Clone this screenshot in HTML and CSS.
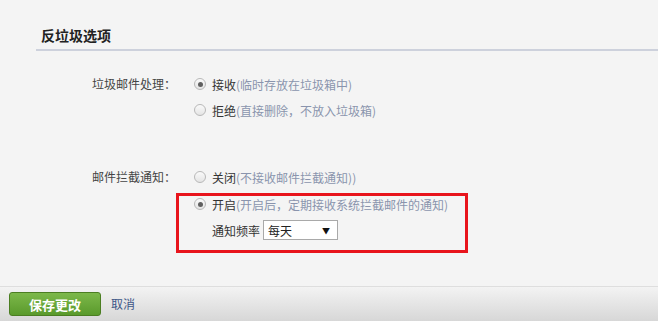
FILE: index.html
```html
<!DOCTYPE html>
<html lang="zh-CN">
<head>
<meta charset="utf-8">
<title>反垃圾选项</title>
<link rel="stylesheet" href="styles.css">
</head>
<body>
<div class="page">
  <div class="main">
    <div class="title">反垃圾选项</div>
    <div class="group group-first">
      <div class="label">垃圾邮件处理：</div>
      <div class="options">
        <div class="opt"><span class="radio checked"></span><span class="txt">接收</span><span class="hint">(临时存放在垃圾箱中)</span></div>
        <div class="opt"><span class="radio"></span><span class="txt">拒绝</span><span class="hint">(直接删除，不放入垃圾箱)</span></div>
      </div>
    </div>
    <div class="group group-second">
      <div class="label">邮件拦截通知：</div>
      <div class="options">
        <div class="opt"><span class="radio"></span><span class="txt">关闭</span><span class="hint">(不接收邮件拦截通知))</span></div>
        <div class="box">
          <div class="opt opt-in"><span class="radio checked"></span><span class="txt">开启</span><span class="hint">(开启后，定期接收系统拦截邮件的通知)</span></div>
          <div class="freq"><span class="freq-label">通知频率</span><div class="select"><span>每天</span><span class="arrow">▼</span></div></div>
        </div>
      </div>
    </div>
  </div>
  <div class="footer">
    <button class="btn-save">保存更改</button>
    <a class="cancel">取消</a>
  </div>
</div>
</body>
</html>
```
FILE: styles.css
```css
html, body {
  margin: 0;
  padding: 0;
}
body {
  background: #f4f4f4;
  font-family: "Microsoft YaHei", "Noto Sans CJK SC", "Noto Sans", sans-serif;
  font-size: 12px;
  color: #444;
}
.page {
  width: 658px;
  height: 321px;
  display: flex;
  flex-direction: column;
}
.main {
  height: 286px;
  padding-left: 36px;
  box-sizing: border-box;
}
.title {
  padding: 26px 0 5px 5px;
  line-height: 18px;
  font-size: 14px;
  font-weight: bold;
  color: #222;
  border-bottom: 2px solid #cdd1dc;
}
.group {
  display: flex;
}
.group-first {
  margin-top: 20px;
}
.group-second {
  margin-top: 41px;
}
.label {
  width: 140px;
  text-align: right;
  line-height: 26px;
  height: 26px;
  color: #444;
}
.options {
  display: flex;
  flex-direction: column;
}
.opt {
  display: flex;
  align-items: center;
  height: 26px;
  padding-left: 18px;
}
.radio {
  width: 10px;
  height: 10px;
  border: 1px solid #b8b8b8;
  border-radius: 50%;
  background: linear-gradient(#fafafa, #e4e4e4);
  display: flex;
  align-items: center;
  justify-content: center;
  margin-right: 6px;
  flex: none;
}
.radio.checked::after {
  content: "";
  width: 5px;
  height: 5px;
  border-radius: 50%;
  background: #5f5f5f;
}
.txt {
  color: #333;
}
.hint {
  color: #8a94ad;
}
.box {
  margin-top: 3px;
  width: 292px;
  box-sizing: border-box;
  border: 3px solid #e8141c;
  padding: 0 0 10px 0;
}
.opt-in {
  height: 16px;
  padding-left: 15px;
}
.freq {
  display: flex;
  align-items: center;
  margin-top: 8px;
  padding-left: 33px;
}
.freq-label {
  margin-right: 3px;
  color: #333;
}
.select {
  width: 75px;
  height: 20px;
  box-sizing: border-box;
  border: 1px solid #a9a9a9;
  background: #fff;
  display: flex;
  align-items: center;
  justify-content: space-between;
  padding: 0 7px 0 4px;
  color: #222;
}
.arrow {
  font-size: 8px;
  color: #111;
}
.footer {
  flex: 1;
  border-top: 1px solid #dedede;
  background: linear-gradient(#f3f3f3, #d7d7d7);
  display: flex;
  align-items: flex-start;
  padding: 5px 0 0 9px;
}
.btn-save {
  width: 92px;
  height: 24px;
  border: 1px solid #4b7e22;
  border-radius: 3px;
  background: linear-gradient(#7cb84a, #5a9a2c);
  color: #fff;
  font-family: inherit;
  font-size: 13px;
  font-weight: bold;
  padding: 0;
}
.cancel {
  margin-left: 10px;
  line-height: 24px;
  color: #3d5687;
  font-size: 12px;
}
```
